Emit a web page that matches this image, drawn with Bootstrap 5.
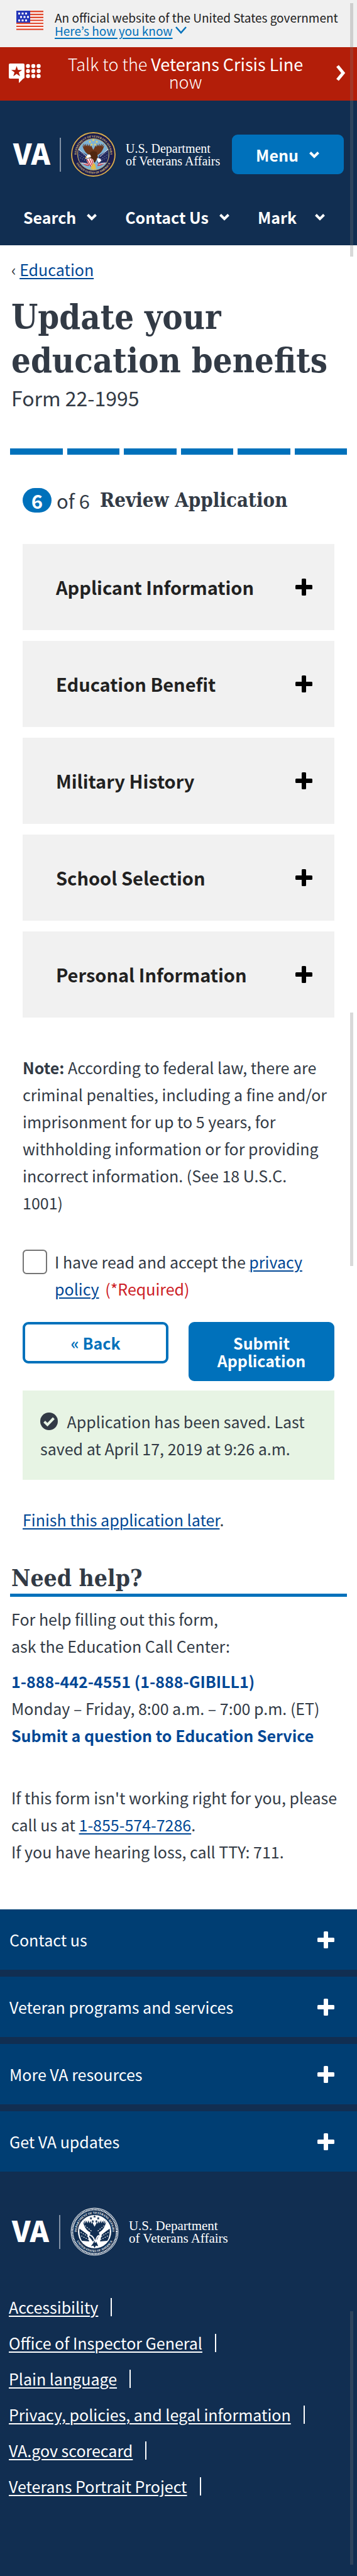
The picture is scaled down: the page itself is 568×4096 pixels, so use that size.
<!DOCTYPE html>
<html lang="en">
<head>
<meta charset="utf-8">
<meta name="viewport" content="width=device-width, initial-scale=1">
<title>Update your education benefits</title>
<link href="https://cdn.jsdelivr.net/npm/bootstrap@5.3.0/dist/css/bootstrap.min.css" rel="stylesheet">
<style>
:root { --navy:#112e51; --blue:#0071bb; --link:#004795; --ink:#323a45; --sans:"Noto Sans CJK KR","Noto Sans",sans-serif; --slab:"DejaVu Serif Condensed","DejaVu Serif",serif; }
body { font-family:var(--sans); font-size:25px; line-height:43px; color:var(--ink); background:#fff; }
a { color:var(--link); text-underline-offset:3px; text-decoration-thickness:2px; }
svg { display:block; flex:none; }
.gov { background:#f0f0f0; padding:17px 20px 16px 26px; gap:18px; font-size:19px; line-height:21px; color:#212121; }
.gov a { color:var(--blue); }
.crisis { background:#b31e09; color:#fff; font-size:27px; line-height:28px; padding:13px 18px 16px 14px; text-decoration:none; }
.crisis:hover { color:#fff; }
.crisis-text { padding:0 40px 0 30px; font-weight:300; }
.masthead { background:var(--navy); color:#fff; padding:49px 0 31px; }
.brand-row { padding:0 21px; gap:15px; }
.va { font:900 46px/50px var(--sans); color:#fff; padding-bottom:8px; }
.rule { width:2px; height:54px; background:#8291a5; }
.dept { font:20px/20px "Liberation Serif",serif; color:#fff; white-space:nowrap; }
.btn-va { --bs-btn-padding-y:17px; --bs-btn-font-size:25px; --bs-btn-line-height:28px; --bs-btn-font-weight:700; --bs-btn-border-radius:9px; --bs-btn-border-width:4px; --bs-btn-color:#fff; --bs-btn-bg:var(--blue); --bs-btn-border-color:var(--blue); --bs-btn-hover-bg:#205493; --bs-btn-hover-color:#fff; font-family:inherit; line-height:28px; padding:15px 8px; }
.btn-back { --bs-btn-color:var(--blue); --bs-btn-bg:#fff; }
.btn-menu { width:178px; height:63px; padding:0; }
.masthead nav { padding:0 50px 0 37px; margin-top:49px; }
.masthead nav button { background:none; border:0; padding:0; color:#fff; font-weight:700; line-height:28px; }
.page { padding:17px 16px 70px; }
.crumb, .title-block, .help { padding:0 2px; }
h1 { font:700 54px/69px var(--slab); margin:20px 0 7px; }
.subtitle { font-size:32px; line-height:34px; margin:0 0 64px; }
.segments { gap:7px; height:10px; }
.segments span { flex:1; background:var(--blue); }
.inner { padding:0 20px; }
.step { font:700 31px/39px var(--slab); margin:53px 0 50px; white-space:nowrap; }
.step-num { font-family:var(--sans); background:var(--blue); color:#fff; width:46px; border-radius:20px; text-align:center; }
.step-of { font-family:var(--sans); font-weight:400; }
.chapters { gap:17px; }
.chapter { background:#f1f1f1; border:0; height:137px; padding:0 35px 0 53px; font-weight:700; font-size:29px; color:#212121; text-align:left; }
.note { margin:58px 0 51px; }
.agree { gap:12px; margin-bottom:31px; }
.agree input { width:39px; height:39px; flex:none; margin:2px 0 0; border:2px solid #757575; border-radius:5px; }
.required { color:#cd2026; }
.actions { gap:32px; margin-bottom:15px; }
.actions .btn { flex:1 1 0; }
.saved { background:#e7f4e4; padding:28px; margin-bottom:42px; }
.saved svg { display:inline-block; vertical-align:-3px; margin-right:9px; }
.help-title { font:700 37px/38px var(--slab); margin:52px 0 14px; padding:0 2px 6px; border-bottom:5px solid var(--blue); }
.help p { margin:0; }
.help .contact-lines { margin:13px 0 56px; }
.help strong a { text-decoration:none; }
.foot { background:var(--navy); color:#fff; padding-bottom:114px; }
.foot-list { gap:11px; }
.foot-item { background:#003e73; border:0; color:#fff; height:96px; padding:0 36px 0 15px; text-align:left; }
.foot-brand { margin:57px 19px 53px; gap:16px; }
.foot-brand .dept { font-size:21px; }
.foot-links { margin:0; padding:0 14px; line-height:57px; }
.foot-links a { color:#fff; }
.foot-links li { display:flex; align-items:center; gap:20px; }
.foot-links li::after { content:""; width:2px; height:29px; background:#fff; }
.thumb { position:absolute; right:6px; width:5px; background:rgba(120,120,120,.28); pointer-events:none; }
.thumb-a { top:5px; height:403px; } .thumb-b { top:1610px; height:403px; } .thumb-c { bottom:18px; height:403px; }
</style>
</head>
<body class="position-relative">
<svg width="0" height="0" class="position-absolute" aria-hidden="true">
  <defs>
    <symbol id="chev" viewBox="0 0 18 12"><path d="M2.500 2.500 9 9l6.500-6.500" fill="none" stroke="currentColor" stroke-width="4"/></symbol>
    <symbol id="plus" viewBox="0 0 27 27"><path d="M10 1.500Q10 0 11.500 0h4Q17 0 17 1.500V10h8.500Q27 10 27 11.500v4q0 1.500-1.500 1.500H17v8.500q0 1.500-1.500 1.500h-4Q10 27 10 25.500V17H1.500Q0 17 0 15.500v-4Q0 10 1.500 10H10z" fill="currentColor"/></symbol>
    <path id="ringTop" d="M12.300 50a29.500 29.500 0 1 1 55.400 0"/>
    <path id="ringBottom" d="M6.500 40a33.500 33.500 0 0 0 67 0"/>
    <path id="star" d="M0-2.600.7-.8 2.500-.8 1 .4 1.600 2.200 0 1.100-1.600 2.200-1 .4-2.500-.8-.7-.8z"/>
    <path id="wing" d="M39 44C35 43 28 39 25 34c-2-3-3-6-4-10l3 3-2-6 4 5-1-5 4 5 0-5 3 5 1-4 2 5 1-3c2 4 3 7 5 9z"/>
  </defs>
</svg>

<div class="gov d-flex align-items-start">
  <svg width="43" height="31" viewBox="0 0 43 31" aria-hidden="true">
    <path fill="#fff" d="M0 0h43v31H0z"/>
    <path stroke="#e04a2f" stroke-width="2.400" d="M0 1.200h43M0 6h43M0 10.700h43M0 15.400h43M0 20.100h43M0 24.900h43M0 29.600h43"/>
    <path fill="#2537b8" d="M0 0h22v19H0z"/>
    <path stroke="#fff" stroke-width="3" stroke-dasharray="3 2.500" d="M3 4.500h14M6 10h14M3 15.500h14"/>
  </svg>
  <div><div>An official website of the United States government</div><a href="#" class="d-inline-flex align-items-center">Here’s how you know <svg class="ms-1" width="18" height="13" viewBox="0 0 18 13"><path d="m1 1 8 9 8-9" fill="none" stroke="currentColor" stroke-width="2.500"/></svg></a></div>
</div>

<a href="#" class="crisis d-flex align-items-center">
  <svg width="51" height="31" viewBox="0 0 51 31" fill="#fff" aria-hidden="true">
    <path d="M2 0h21q2 0 2 2v20q0 2-2 2l-7 7v-7H2q-2 0-2-2V2Q0 0 2 0z"/>
    <path fill="#b31e09" d="m12.500 4 2.100 6.200h6.600L15.900 14l2 6.300-5.400-3.800-5.400 3.800 2-6.300-5.300-3.800h6.600z"/>
    <circle cx="30.500" cy="4" r="3.200"/><circle cx="39" cy="4" r="3.200"/><circle cx="47.500" cy="4" r="3.200"/><circle cx="30.500" cy="12" r="3.200"/><circle cx="39" cy="12" r="3.200"/><circle cx="47.500" cy="12" r="3.200"/><circle cx="30.500" cy="20" r="3.200"/><circle cx="39" cy="20" r="3.200"/><circle cx="47.500" cy="20" r="3.200"/>
  </svg>
  <span class="crisis-text flex-fill text-center">Talk to the <strong>Veterans Crisis Line</strong><br>now</span>
  <svg width="15" height="28" viewBox="0 0 15 28" aria-hidden="true"><path d="m2 3 9 11-9 11" fill="none" stroke="#fff" stroke-width="5"/></svg>
</a>

<header class="masthead">
  <div class="brand-row d-flex align-items-center">
    <span class="va">VA</span><span class="rule"></span>
    <svg width="73" height="73" viewBox="0 0 80 80" role="img" aria-label="Seal">
      <circle cx="40" cy="40" r="39.500" fill="#1b1d4e"/>
      <circle cx="40" cy="40" r="37.800" fill="none" stroke="#d6b04c" stroke-width="2"/>
      <g fill="#e2c878" font-family="Liberation Serif,serif" font-size="5" font-weight="700"><text text-anchor="middle"><textPath href="#ringTop" startOffset="50%">DEPARTMENT OF VETERANS AFFAIRS</textPath></text><text text-anchor="middle"><textPath href="#ringBottom" startOffset="50%">UNITED STATES OF AMERICA</textPath></text></g>
      <circle cx="40" cy="40" r="27.500" fill="#7db2d6" stroke="#c9a64a" stroke-width="1"/>
      <path fill="#20285e" d="m14 32 16 10 3 13-16-1q-5-9-3-22zM66 32 50 42l-3 13 16-1q5-9 3-22z"/>
      <path stroke="#e6e6ee" stroke-width="1" stroke-dasharray="1 3" d="m16 36 12 8M16 41l13 8M17 46l12 6M64 36l-12 8M64 41l-13 8M63 46l-12 6"/>
      <path fill="#c03040" d="M18 53q7 8 15 7l-2-5-7 1zM62 53q-7 8-15 7l2-5 7 1z"/>
      <path stroke="#fff" stroke-width="1" d="m20 55 11 3M60 55l-11 3M14 31l15 13M66 31 51 44"/>
      <use href="#wing" fill="#6a3519"/><use href="#wing" fill="#6a3519" transform="matrix(-1 0 0 1 80 0)"/>
      <path fill="#51270f" d="M35 36q5-3 11 0l2 9-5 9-7 1-5-9z"/>
      <path fill="#fff" d="M28 43q3-5 7-2l1 4-5 1-5 2z"/><path fill="#e1ab3c" d="m28 43-3 4 4-1z"/>
      <path fill="#fff" d="M28 48q9-3 12 2l2 12q-11-1-14-14zM46 47q6-2 8 4l-5 4z"/>
      <path stroke="#cf2734" stroke-width="1.500" d="m29 49 7 12M33 48l6 14M37 48l4 14"/>
      <path fill="#e5bb45" d="m37 60 3-5 3 2 2 10-3-2-2 3-2-3-3 1z"/>
      <g fill="#f1d35b"><use href="#star" x="34" y="18"/><use href="#star" x="40" y="15"/><use href="#star" x="46" y="18"/><use href="#star" x="37" y="23"/><use href="#star" x="43" y="23"/></g>
    </svg>
    <div class="dept">U.S. Department<br>of Veterans Affairs</div>
    <button class="btn btn-va btn-menu ms-auto d-flex align-items-center justify-content-center gap-3">Menu <svg width="18" height="12"><use href="#chev"/></svg></button>
  </div>
  <nav class="d-flex justify-content-between">
    <button class="d-flex align-items-center gap-3">Search <svg width="18" height="12"><use href="#chev"/></svg></button>
    <button class="d-flex align-items-center gap-3">Contact Us <svg width="18" height="12"><use href="#chev"/></svg></button>
    <button class="d-flex align-items-center gap-4"><span class="pe-1">Mark</span> <svg width="18" height="12"><use href="#chev"/></svg></button>
  </nav>
</header>

<main class="page">
  <div class="crumb">‹ <a href="#">Education</a></div>
  <div class="title-block">
    <h1>Update your<br>education benefits</h1>
    <p class="subtitle">Form 22-1995</p>
  </div>
  <div class="segments d-flex"><span></span><span></span><span></span><span></span><span></span><span></span></div>
  <div class="inner">
    <h2 class="step d-flex align-items-center"><span class="step-num">6</span><span class="step-of ms-2 me-3">of 6</span>Review Application</h2>
    <div class="chapters d-flex flex-column">
      <button class="chapter d-flex align-items-center justify-content-between">Applicant Information <svg width="27" height="27" color="#000"><use href="#plus"/></svg></button>
      <button class="chapter d-flex align-items-center justify-content-between">Education Benefit <svg width="27" height="27" color="#000"><use href="#plus"/></svg></button>
      <button class="chapter d-flex align-items-center justify-content-between">Military History <svg width="27" height="27" color="#000"><use href="#plus"/></svg></button>
      <button class="chapter d-flex align-items-center justify-content-between">School Selection <svg width="27" height="27" color="#000"><use href="#plus"/></svg></button>
      <button class="chapter d-flex align-items-center justify-content-between">Personal Information <svg width="27" height="27" color="#000"><use href="#plus"/></svg></button>
    </div>
    <p class="note"><strong>Note:</strong> According to federal law, there are criminal penalties, including a fine and/or imprisonment for up to 5 years, for withholding information or for providing incorrect information. (See 18 U.S.C.<br>1001)</p>
    <div class="agree d-flex align-items-start">
      <input class="form-check-input" type="checkbox" id="privacy">
      <label for="privacy">I have read and accept the <a href="#">privacy policy</a> <span class="required ms-1">(*Required)</span></label>
    </div>
    <div class="actions d-flex align-items-start">
      <button class="btn btn-va btn-back">« Back</button>
      <button class="btn btn-va">Submit<br>Application</button>
    </div>
    <div class="saved"><svg width="28" height="28" viewBox="0 0 28 28" aria-hidden="true"><circle cx="14" cy="14" r="14" fill="#323a45"/><path d="m6.500 14.500 5 5L21.500 9" fill="none" stroke="#e7f4e4" stroke-width="4"/></svg> Application has been saved. Last saved at April 17, 2019 at 9:26 a.m.</div>
    <div><a href="#">Finish this application later</a>.</div>
  </div>
  <h2 class="help-title">Need help?</h2>
  <div class="help">
    <p>For help filling out this form,<br>ask the Education Call Center:</p>
    <p class="contact-lines"><strong><a href="#">1-888-442-4551 (1-888-GIBILL1)</a></strong><br>Monday – Friday, 8:00 a.m. – 7:00 p.m. (ET)<br><strong><a href="#">Submit a question to Education Service</a></strong></p>
    <p>If this form isn't working right for you, please call us at <a href="#">1-855-574-7286</a>.<br>If you have hearing loss, call TTY: 711.</p>
  </div>
</main>

<footer class="foot">
  <div class="foot-list d-flex flex-column">
    <button class="foot-item d-flex align-items-center justify-content-between">Contact us <svg width="27" height="27"><use href="#plus"/></svg></button>
    <button class="foot-item d-flex align-items-center justify-content-between">Veteran programs and services <svg width="27" height="27"><use href="#plus"/></svg></button>
    <button class="foot-item d-flex align-items-center justify-content-between">More VA resources <svg width="27" height="27"><use href="#plus"/></svg></button>
    <button class="foot-item d-flex align-items-center justify-content-between">Get VA updates <svg width="27" height="27"><use href="#plus"/></svg></button>
  </div>
  <div class="foot-brand d-flex align-items-center">
    <span class="va">VA</span><span class="rule"></span>
    <svg width="77" height="77" viewBox="0 0 80 80" role="img" aria-label="Seal">
      <circle cx="40" cy="40" r="39" fill="#112e51" stroke="#fff" stroke-width="1"/>
      <circle cx="40" cy="40" r="36.500" fill="none" stroke="#fff" stroke-width="2.600" stroke-dasharray="1.500 1"/>
      <g fill="#fff" font-family="Liberation Serif,serif" font-size="5" font-weight="700"><text text-anchor="middle"><textPath href="#ringTop" startOffset="50%">DEPARTMENT OF VETERANS AFFAIRS</textPath></text><text text-anchor="middle"><textPath href="#ringBottom" startOffset="50%">UNITED STATES OF AMERICA</textPath></text></g>
      <circle cx="40" cy="40" r="27.500" fill="#fff"/>
      <g fill="#112e51">
        <path d="m15 35 13 9 3 12-12-1q-5-8-4-20zM65 35 52 44l-3 12 12-1q5-8 4-20z"/>
        <use href="#wing"/><use href="#wing" transform="matrix(-1 0 0 1 80 0)"/>
        <path d="M35 36q5-3 11 0l2 9-4 8-7 3-6-8z"/>
        <path d="m37 60 3-5 3 2 3 7-4-1-2 4-2-4-4 1z"/>
        <use href="#star" x="34" y="18"/><use href="#star" x="40" y="15"/><use href="#star" x="46" y="18"/><use href="#star" x="37" y="23"/><use href="#star" x="43" y="23"/>
      </g>
      <path stroke="#fff" stroke-width="1.200" stroke-dasharray="2 2" d="m17 41 12 7M18 47l12 6M63 41l-12 7M62 47l-12 6M24 30l12 10M56 30 44 40"/>
      <path stroke="#fff" stroke-width="2" fill="none" d="m14 32 17 14M66 32 49 46M31 45q7 2 9 10M47 46q-5 4-6 12"/>
    </svg>
    <div class="dept">U.S. Department<br>of Veterans Affairs</div>
  </div>
  <ul class="foot-links list-unstyled">
    <li><a href="#">Accessibility</a></li>
    <li><a href="#">Office of Inspector General</a></li>
    <li><a href="#">Plain language</a></li>
    <li><a href="#">Privacy, policies, and legal information</a></li>
    <li><a href="#">VA.gov scorecard</a></li>
    <li><a href="#">Veterans Portrait Project</a></li>
  </ul>
</footer>
<div class="thumb thumb-a"></div><div class="thumb thumb-b"></div><div class="thumb thumb-c"></div>
<script src="https://cdn.jsdelivr.net/npm/bootstrap@5.3.0/dist/js/bootstrap.bundle.min.js"></script>
</body>
</html>
